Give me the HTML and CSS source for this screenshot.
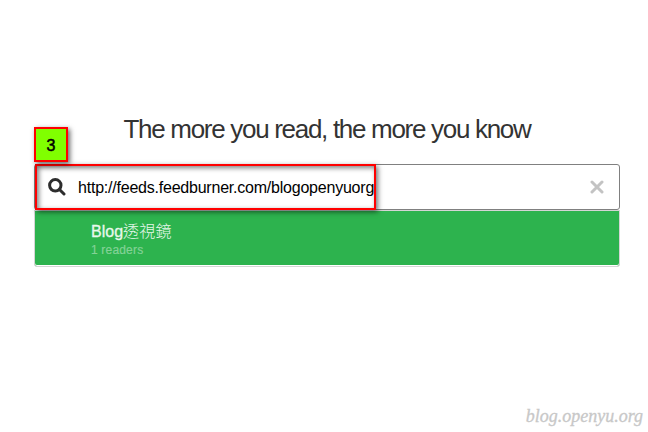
FILE: index.html
```html
<!DOCTYPE html>
<html lang="en">
<head>
<meta charset="utf-8">
<title>Feed search</title>
<link rel="stylesheet" href="styles.css">
</head>
<body>
<main class="search">
  <h1 class="title">The more you read, the more you know</h1>
  <div class="field">
    <svg class="lens" viewBox="0 0 18 18"><circle cx="7.3" cy="7.3" r="5.7"/><path d="M11.5 11.5L16 16"/></svg>
    <span class="query">http://feeds.feedburner.com/blogopenyuorg</span>
    <svg class="clear" viewBox="0 0 14 14"><path d="M2 2L12 12M12 2L2 12"/></svg>
    <div class="highlight"></div>
    <div class="step">3</div>
  </div>
  <div class="result">
    <div class="name">Blog<span class="cjk">透視鏡</span></div>
    <div class="readers">1 readers</div>
  </div>
</main>
<footer class="watermark">blog.openyu.org</footer>
</body>
</html>
```
FILE: styles.css
```css
* { box-sizing: border-box; }
body {
  margin: 0;
  height: 432px;
  overflow: hidden;
  background: #fff;
  font-family: "Liberation Sans", "Noto Sans CJK TC", sans-serif;
  display: flex;
  flex-direction: column;
  justify-content: space-between;
}
.search { width: 586px; margin: 114px 0 0 34px; }
.title {
  margin: 0 0 20px;
  height: 30px;
  line-height: 30px;
  text-align: center;
  font-size: 26px;
  font-weight: 400;
  letter-spacing: -1.3px;
  color: #333;
  white-space: nowrap;
}
.field {
  position: relative;
  height: 46px;
  display: flex;
  align-items: center;
  padding: 0 15px 0 13px;
  border: 1px solid #808080;
  border-radius: 3px;
}
.lens { width: 18px; height: 18px; fill: none; stroke: #2d2d2d; stroke-width: 3; stroke-linecap: round; }
.query { margin-left: 12px; padding-top: 2px; font-size: 16px; letter-spacing: -0.22px; color: #000; white-space: nowrap; }
.clear { width: 14px; height: 14px; margin-left: auto; fill: none; stroke: #c3c3c3; stroke-width: 3; stroke-linecap: round; }
.highlight {
  position: absolute;
  left: 0;
  top: -1px;
  width: 341px;
  height: 46px;
  border: 2px solid #f00;
  box-shadow: 2px 2px 5px rgba(0,0,0,.55), inset 2px 2px 5px rgba(0,0,0,.5);
}
.step {
  position: absolute;
  left: -1px;
  top: -38px;
  width: 34px;
  height: 35px;
  border: 2px solid #f00;
  background: #80ff00;
  box-shadow: 2px 2px 5px rgba(0,0,0,.6);
  text-align: center;
  line-height: 33px;
  font-size: 16px;
  -webkit-text-stroke: .5px #000;
}
.result {
  height: 57px;
  padding: 10px 0 0 56px;
  border: 1px solid #d5d5d5;
  border-radius: 0 0 3px 3px;
  background: #2db34e;
  box-shadow: inset 0 -1px #fff;
}
.name { height: 18px; line-height: 18px; font-size: 16px; color: #e8f8ec; white-space: nowrap; -webkit-text-stroke: .3px #e8f8ec; }
.cjk { font-weight: 300; font-family: "Noto Sans CJK TC", sans-serif; letter-spacing: .2px; -webkit-text-stroke: 0; }
.readers { height: 16px; line-height: 22px; font-size: 12px; letter-spacing: .18px; color: #83d296; -webkit-text-stroke: .2px #83d296; }
.watermark {
  align-self: flex-end;
  margin: 0 5px 4px 0;
  font: italic 18px/24px "Monotype Corsiva", "Liberation Serif", serif;
  letter-spacing: 0;
  color: #c8c8c8;
  -webkit-text-stroke: .3px #c8c8c8;
}
```
